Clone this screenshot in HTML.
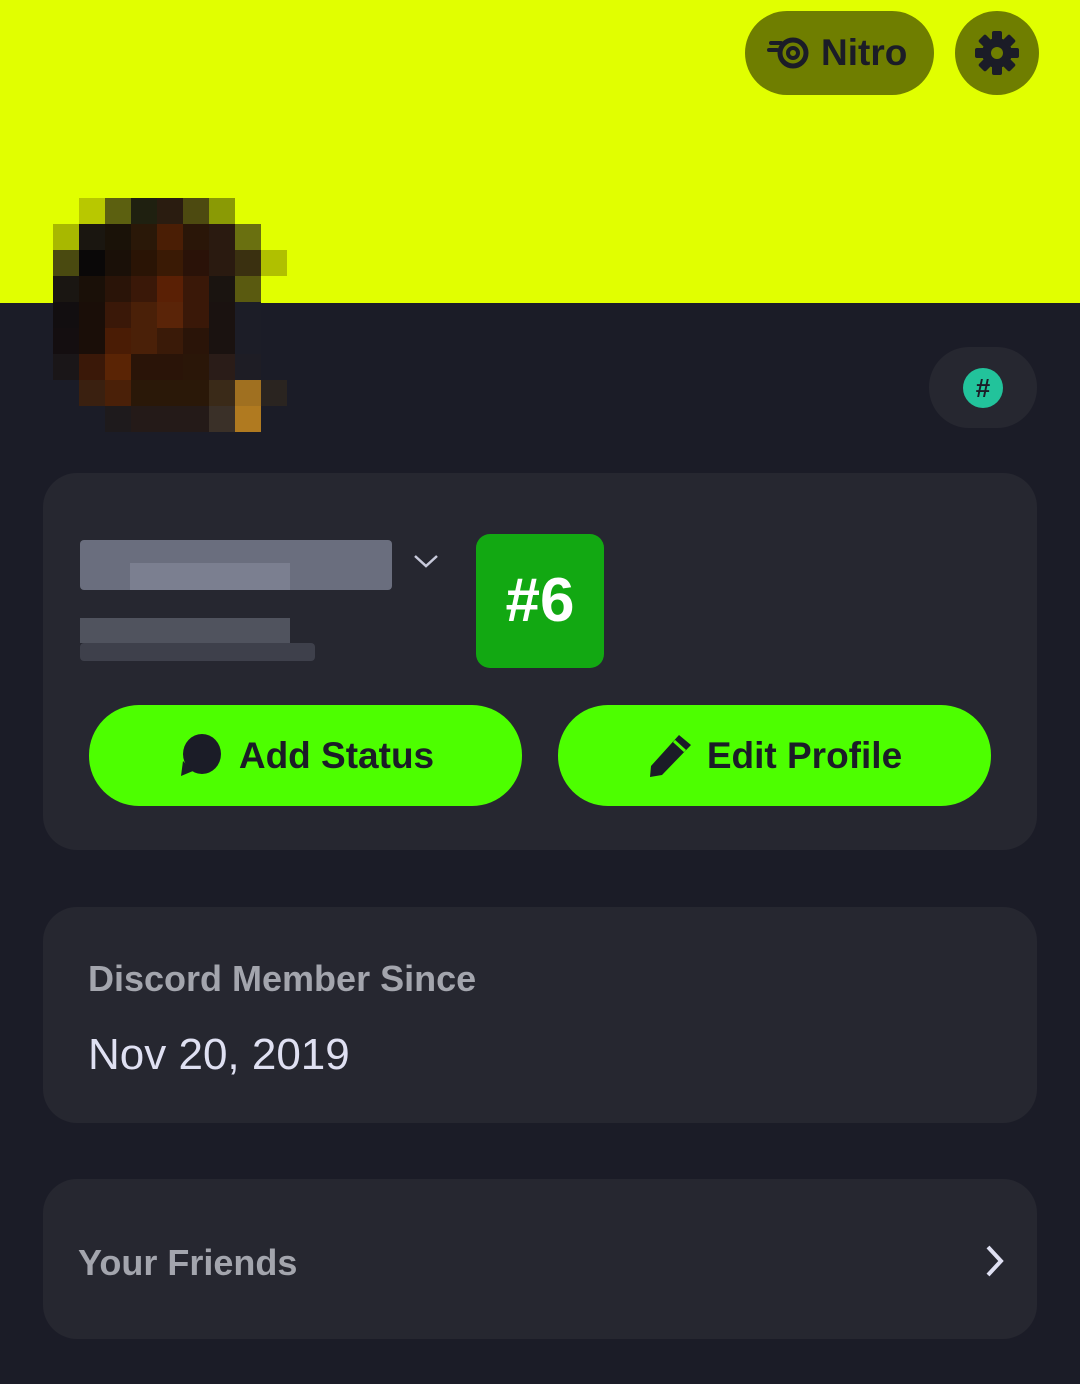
<!DOCTYPE html>
<html><head><meta charset="utf-8"><style>
*{margin:0;padding:0;box-sizing:border-box}
body{width:1080px;height:1384px;background:#1b1c27;font-family:"Liberation Sans",sans-serif;position:relative;overflow:hidden}
.banner{position:absolute;left:0;top:0;width:1080px;height:303px;background:#e1ff00}
.nitro{position:absolute;left:745px;top:11px;width:189px;height:84px;border-radius:42px;background:#6f7e00;display:flex;align-items:center;padding-left:22px;color:#1b1c27;font-weight:bold;font-size:37px}
.gear{position:absolute;left:955px;top:11px;width:84px;height:84px;border-radius:50%;background:#6f7e00}
.av{position:absolute;left:53px;top:198px;display:grid;grid-template-columns:repeat(9,26px);grid-auto-rows:26px}
.card{position:absolute;left:43px;width:994px;background:#262730;border-radius:34px}
.btn{position:absolute;top:705px;width:433px;height:101px;border-radius:50px;background:#4dff00;display:flex;align-items:center;justify-content:center;color:#1b1c27;font-weight:bold;font-size:37px}
</style></head><body>
<div class="banner"></div>
<div class="nitro"><svg width="44" height="36" viewBox="0 0 44 36" style="margin-right:10px"><circle cx="26" cy="18" r="13" fill="none" stroke="#1b1c27" stroke-width="5"/><circle cx="26" cy="18" r="5" fill="none" stroke="#1b1c27" stroke-width="4"/><rect x="2" y="6" width="14" height="4" rx="2" fill="#1b1c27"/><rect x="0" y="13" width="12" height="4" rx="2" fill="#1b1c27"/></svg>Nitro</div>
<div class="gear"><svg width="84" height="84" viewBox="0 0 84 84"><g fill="#1b1c27" transform="translate(42 42)"><circle r="15"/><g id="t"><rect x="-5" y="-22" width="10" height="10" rx="2"/></g><use href="#t" transform="rotate(45)"/><use href="#t" transform="rotate(90)"/><use href="#t" transform="rotate(135)"/><use href="#t" transform="rotate(180)"/><use href="#t" transform="rotate(225)"/><use href="#t" transform="rotate(270)"/><use href="#t" transform="rotate(315)"/></g><circle cx="42" cy="42" r="6" fill="#6f7e00"/></svg></div>
<div class="av">
<div></div><div style="background:#b8c800"></div><div style="background:#5c6010"></div><div style="background:#1f2010"></div><div style="background:#2a1c10"></div><div style="background:#4d4a10"></div><div style="background:#8a9a05"></div><div></div><div></div>
<div style="background:#a8b800"></div><div style="background:#1a1610"></div><div style="background:#1a1208"></div><div style="background:#2a1808"></div><div style="background:#4a1e05"></div><div style="background:#2a1608"></div><div style="background:#2a1a10"></div><div style="background:#6a7010"></div><div></div>
<div style="background:#4a4a10"></div><div style="background:#0a0808"></div><div style="background:#1a1008"></div><div style="background:#2a1405"></div><div style="background:#3a1a05"></div><div style="background:#2a1208"></div><div style="background:#2a1a10"></div><div style="background:#3a3010"></div><div style="background:#b0c000"></div>
<div style="background:#1a1612"></div><div style="background:#1a1008"></div><div style="background:#2a1408"></div><div style="background:#3a1808"></div><div style="background:#5a2005"></div><div style="background:#3a1808"></div><div style="background:#1a1410"></div><div style="background:#5a5a10"></div><div></div>
<div style="background:#120e10"></div><div style="background:#1a0e08"></div><div style="background:#3a1808"></div><div style="background:#4a2008"></div><div style="background:#5a2408"></div><div style="background:#3a1808"></div><div style="background:#1a1210"></div><div style="background:#1c1d27"></div><div></div>
<div style="background:#140e10"></div><div style="background:#1a0e08"></div><div style="background:#4a1c05"></div><div style="background:#4a2008"></div><div style="background:#3a1a08"></div><div style="background:#2a1408"></div><div style="background:#1a1210"></div><div style="background:#1c1d27"></div><div></div>
<div style="background:#1a1618"></div><div style="background:#3a1808"></div><div style="background:#5a2405"></div><div style="background:#2a1408"></div><div style="background:#2a1408"></div><div style="background:#2a1608"></div><div style="background:#2a1c18"></div><div style="background:#1e1d25"></div><div></div>
<div></div><div style="background:#3a2010"></div><div style="background:#4a2008"></div><div style="background:#2a1808"></div><div style="background:#2a1808"></div><div style="background:#2a1808"></div><div style="background:#3a2a18"></div><div style="background:#a07020"></div><div style="background:#2a2420"></div>
<div></div><div></div><div style="background:#1e1a1c"></div><div style="background:#241a18"></div><div style="background:#241a18"></div><div style="background:#241a18"></div><div style="background:#3a3028"></div><div style="background:#b07a20"></div><div></div>
</div>
<div style="position:absolute;left:929px;top:347px;width:108px;height:81px;border-radius:40px;background:#262730"></div>
<div style="position:absolute;left:963px;top:368px;width:40px;height:40px;border-radius:50%;background:#22c39b;color:#1b1c27;font-weight:bold;font-size:26px;text-align:center;line-height:40px">#</div>
<div class="card" style="top:473px;height:377px"></div>
<div style="position:absolute;left:80px;top:540px;width:312px;height:50px;background:#6a6e7e;border-radius:4px"></div>
<div style="position:absolute;left:130px;top:563px;width:160px;height:27px;background:#7b7f90"></div>
<div style="position:absolute;left:80px;top:618px;width:210px;height:25px;background:#50535e"></div>
<div style="position:absolute;left:80px;top:643px;width:235px;height:18px;background:#3e404b;border-radius:4px"></div>
<svg style="position:absolute;left:413px;top:553px" width="26" height="16"><path d="M2 3 L13 13 L24 3" stroke="#c8cadb" stroke-width="2.5" fill="none"/></svg>
<div style="position:absolute;left:476px;top:534px;width:128px;height:134px;border-radius:14px;background:#12a812;color:#fff;font-weight:bold;font-size:62px;text-align:center;line-height:134px">#6</div>
<div class="btn" style="left:89px"><svg width="46" height="46" viewBox="0 0 46 46" style="margin-right:16px"><ellipse cx="25" cy="21" rx="19" ry="20" fill="#1b1c27"/><path d="M6 28 L4 43 L16 38 Z" fill="#1b1c27"/></svg>Add Status</div>
<div class="btn" style="left:558px"><svg width="46" height="46" viewBox="0 0 46 46" style="margin-right:14px"><path d="M32 2 L44 12 L15 42 L3 44 L4 33 Z" fill="#1b1c27"/><path d="M27 8 L38 18" stroke="#4dff00" stroke-width="3"/></svg>Edit Profile</div>
<div class="card" style="top:907px;height:216px"></div>
<div style="position:absolute;left:88px;top:958px;color:#a3a5ad;font-weight:bold;font-size:36px">Discord Member Since</div>
<div style="position:absolute;left:88px;top:1030px;color:#dfe0f2;font-size:44px">Nov 20, 2019</div>
<div class="card" style="top:1179px;height:160px"></div>
<div style="position:absolute;left:78px;top:1242px;color:#a3a5ad;font-weight:bold;font-size:36px">Your Friends</div>
<svg style="position:absolute;left:984px;top:1244px" width="22" height="34"><path d="M4 3 L17 17 L4 31" stroke="#dfe0f2" stroke-width="4" fill="none"/></svg>
</body></html>
